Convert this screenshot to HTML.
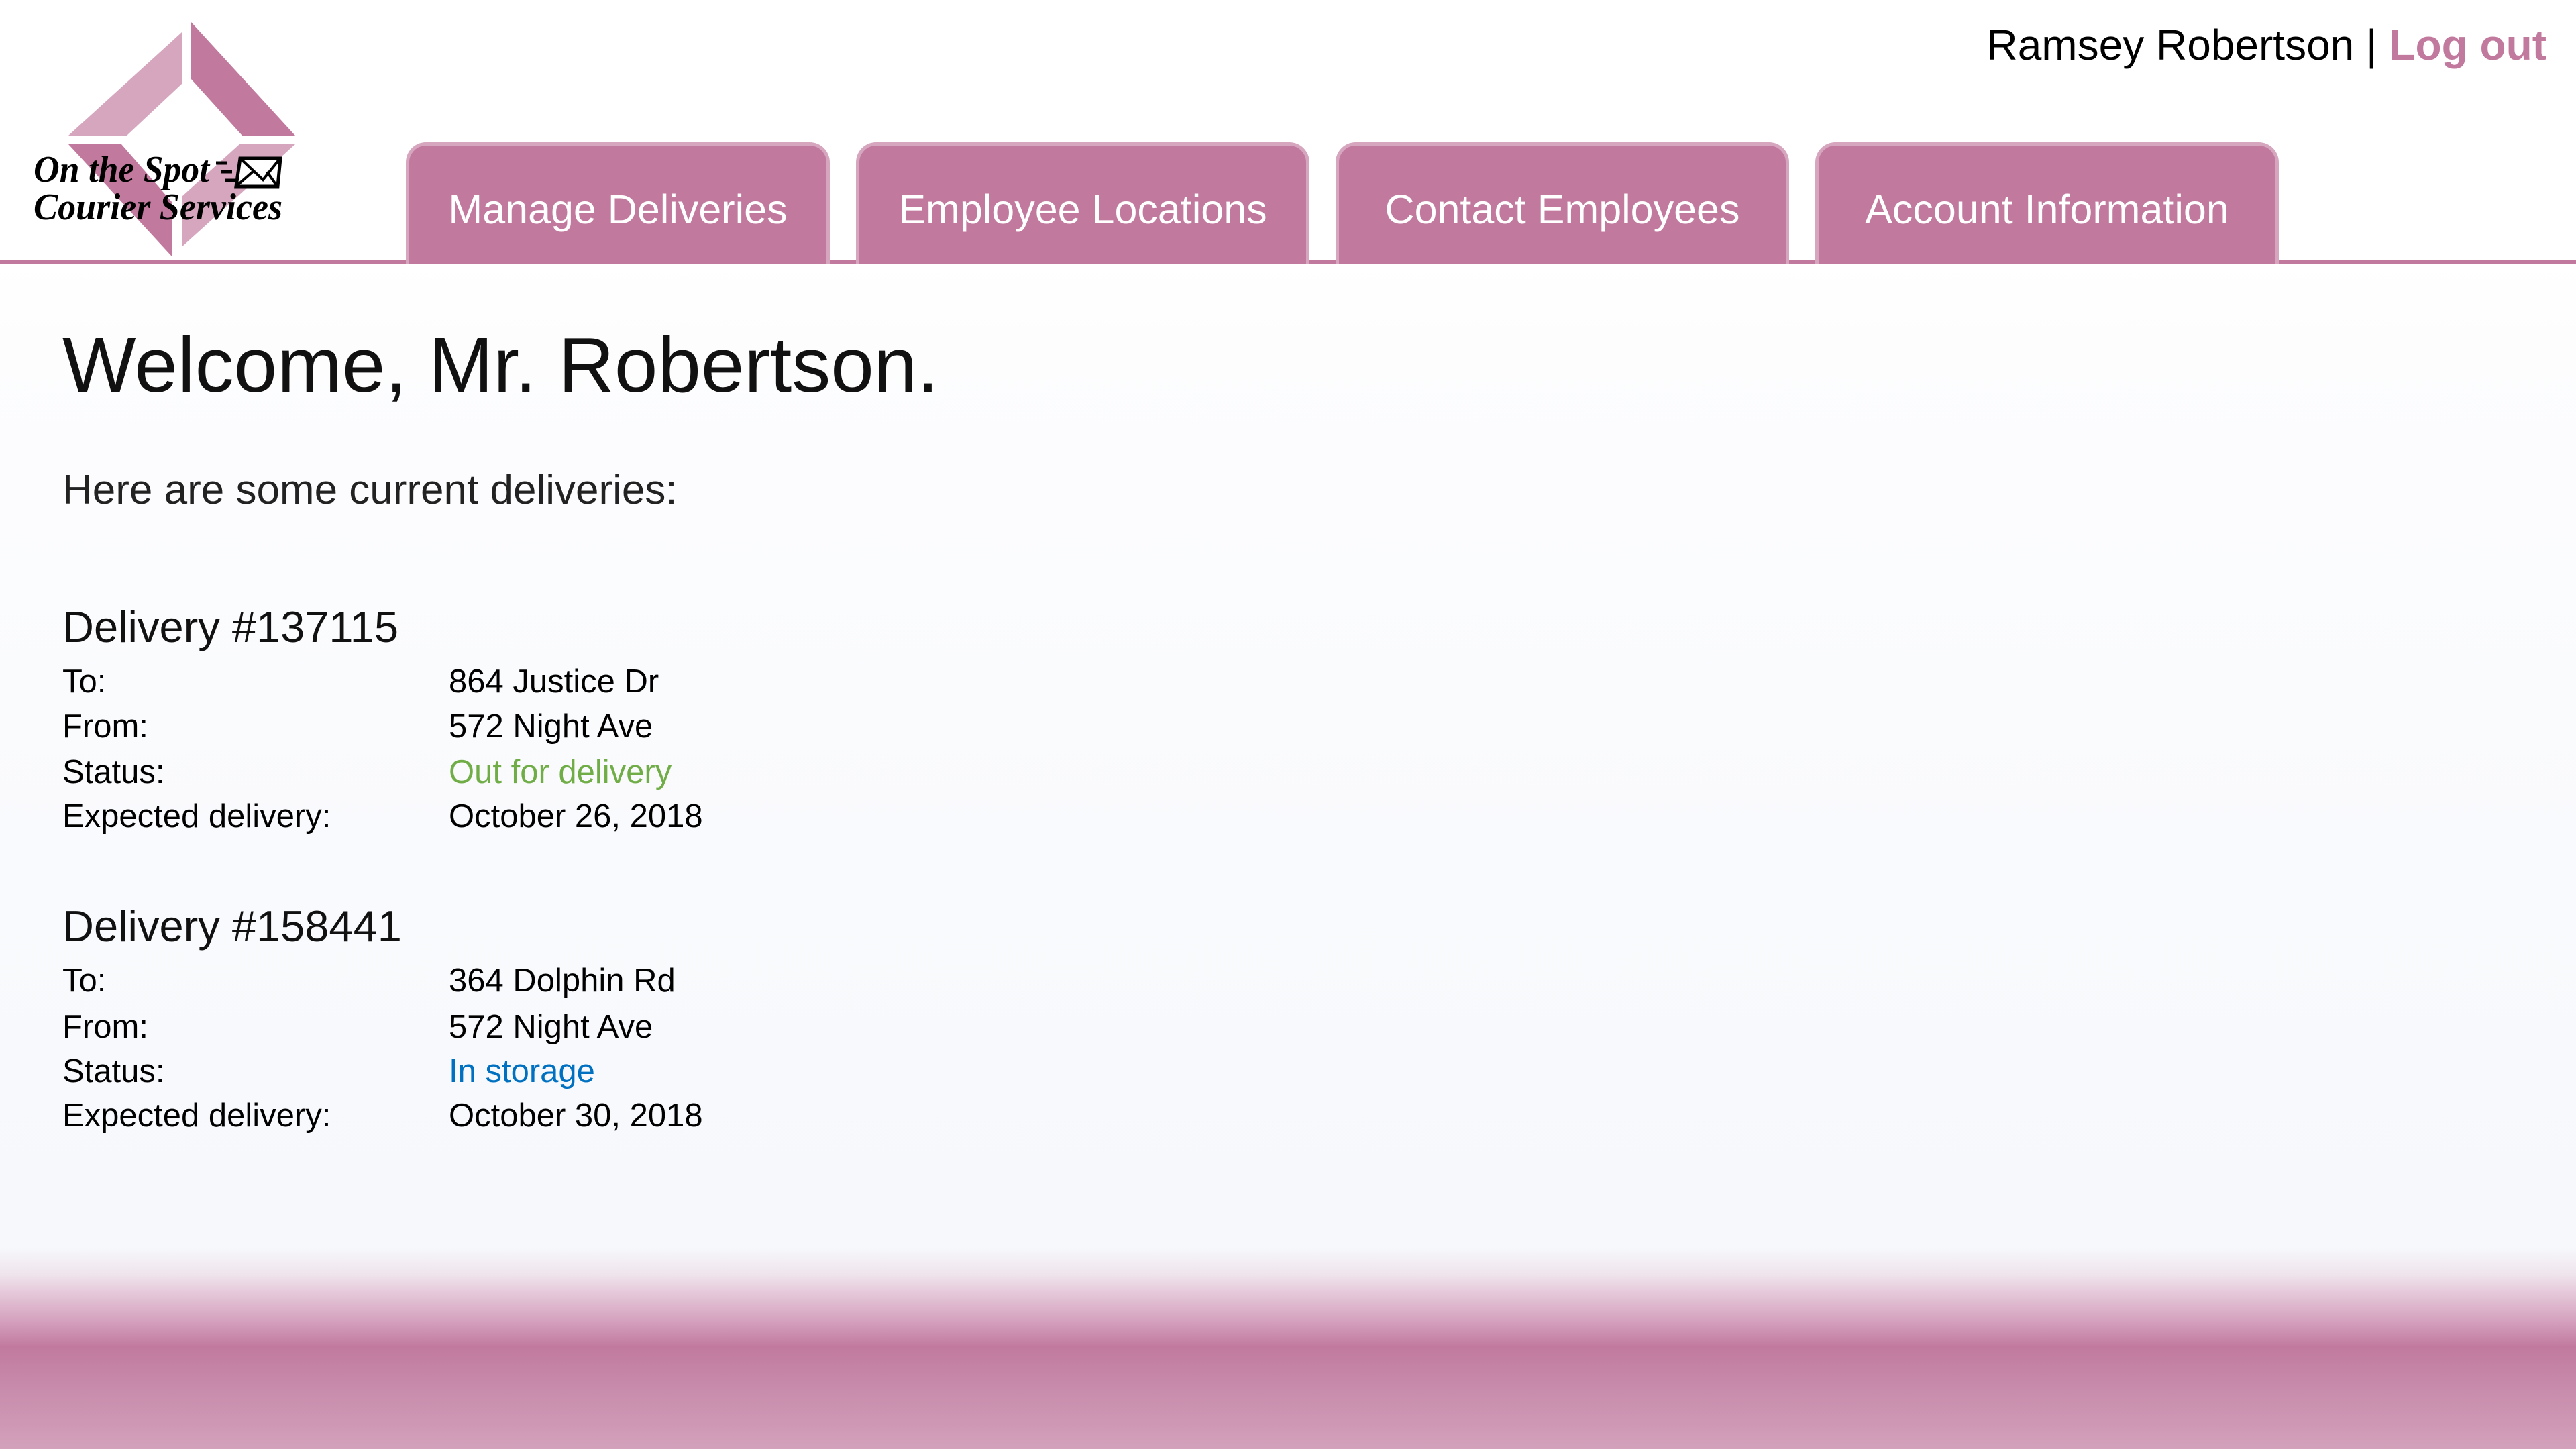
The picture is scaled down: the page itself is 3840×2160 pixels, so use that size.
<!DOCTYPE html>
<html><head><meta charset="utf-8"><style>
html,body{margin:0;padding:0}
body{width:3840px;height:2160px;position:relative;overflow:hidden;font-family:"Liberation Sans",sans-serif;
background:linear-gradient(to bottom,#fff 0,#fff 393px,#fdfdfe 500px,#f6f8fc 1860px,#efe4ec 1900px,#e4c6d8 1930px,#d4a0bd 1970px,#c17a9e 2008px,#c98ead 2080px,#d3a1bb 2160px);}
.t{position:absolute;white-space:nowrap;line-height:1}
.line{position:absolute;left:0;top:387px;width:3840px;height:6px;background:#c17a9e}
.tab{position:absolute;top:212px;height:181px;background:#c17a9e;border:5px solid #d6a6bf;border-bottom:none;border-radius:30px 30px 0 0;box-sizing:border-box;color:#fff;font-size:61px;text-align:center;line-height:190px;white-space:nowrap}
.lbl{left:93px}.val{left:669px}
.r{font-size:49px}
</style></head><body>
<svg style="position:absolute;left:0;top:0" width="460" height="400" viewBox="0 0 460 400">
<polygon points="271,48 271,125 189,202 102,202" fill="#d6a6bf"/>
<polygon points="285,33 285,118 361,202 440,202" fill="#c17a9e"/>
<polygon points="102,215 181,215 257,302 257,383" fill="#c17a9e"/>
<polygon points="440,215 357,215 271,293 271,368" fill="#d6a6bf"/>
<text x="50" y="271" font-family="Liberation Serif,serif" font-weight="bold" font-style="italic" font-size="56" fill="#000" textLength="262" lengthAdjust="spacingAndGlyphs">On the Spot</text>
<text x="50" y="327" font-family="Liberation Serif,serif" font-weight="bold" font-style="italic" font-size="56" fill="#000" textLength="371" lengthAdjust="spacingAndGlyphs">Courier Services</text>
<polygon points="358,236 418,236 414,278 352,278" fill="#fff" stroke="#000" stroke-width="5"/>
<path d="M360 238 L392 268 L416 238 M354 276 L378 255 M412 276 L398 256" stroke="#000" stroke-width="4" fill="none"/>
<path d="M322 243 h16 M330 256 h16 M336 269 h14" stroke="#000" stroke-width="5"/>
</svg>
<div class="t" style="right:44px;top:35px;font-size:64px;color:#000">Ramsey Robertson&nbsp;|&nbsp;<b style="color:#c17a9e">Log out</b></div>
<div class="line"></div>
<div class="tab" style="left:605px;width:632px">Manage Deliveries</div>
<div class="tab" style="left:1276px;width:676px">Employee Locations</div>
<div class="tab" style="left:1991px;width:676px">Contact Employees</div>
<div class="tab" style="left:2706px;width:691px">Account Information</div>
<div class="t" style="left:93px;top:486px;font-size:116px;color:#111">Welcome, Mr. Robertson.</div>
<div class="t" style="left:93px;top:700px;font-size:62px;color:#222">Here are some current deliveries:</div>
<div class="t" style="left:93px;top:902px;font-size:65px;color:#111">Delivery #137115</div>
<div class="t r lbl" style="top:992px">To:</div><div class="t r val" style="top:992px">864 Justice Dr</div>
<div class="t r lbl" style="top:1059px">From:</div><div class="t r val" style="top:1059px">572 Night Ave</div>
<div class="t r lbl" style="top:1127px">Status:</div><div class="t r val" style="top:1127px;color:#70ad47">Out for delivery</div>
<div class="t r lbl" style="top:1193px">Expected delivery:</div><div class="t r val" style="top:1193px">October 26, 2018</div>
<div class="t" style="left:93px;top:1348px;font-size:65px;color:#111">Delivery #158441</div>
<div class="t r lbl" style="top:1438px">To:</div><div class="t r val" style="top:1438px">364 Dolphin Rd</div>
<div class="t r lbl" style="top:1507px">From:</div><div class="t r val" style="top:1507px">572 Night Ave</div>
<div class="t r lbl" style="top:1573px">Status:</div><div class="t r val" style="top:1573px;color:#0070c0">In storage</div>
<div class="t r lbl" style="top:1639px">Expected delivery:</div><div class="t r val" style="top:1639px">October 30, 2018</div>
</body></html>
